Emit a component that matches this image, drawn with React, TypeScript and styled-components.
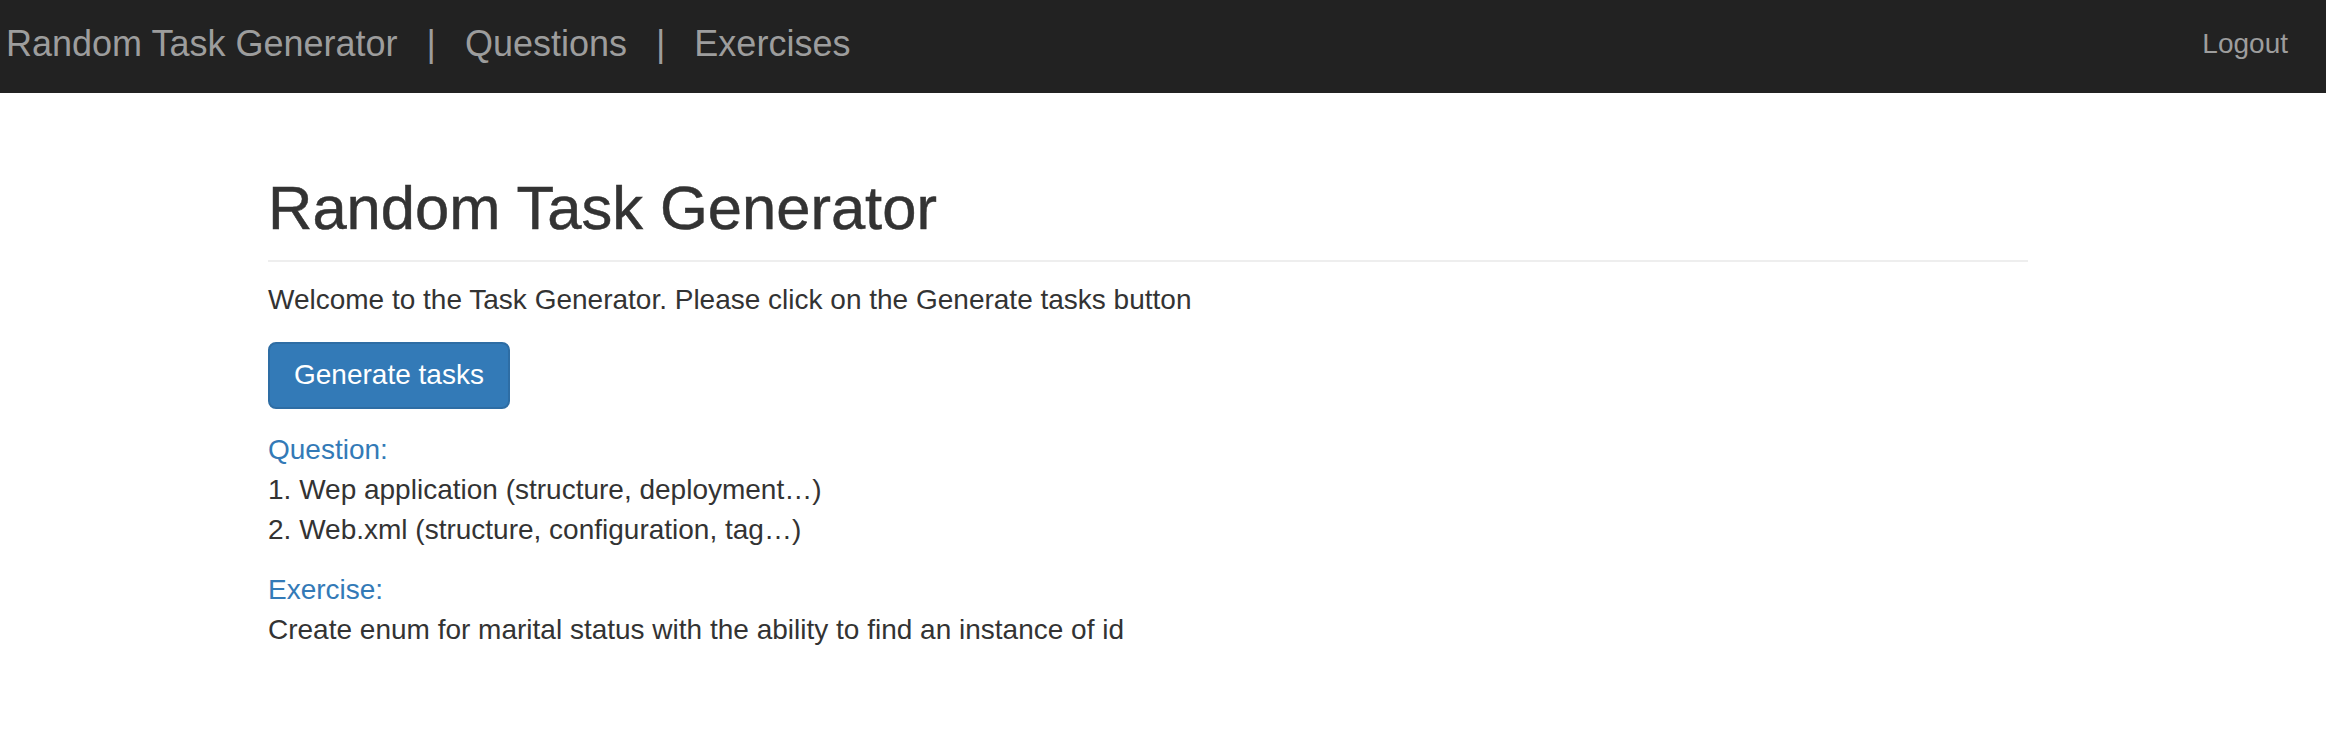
import styled, { createGlobalStyle } from "styled-components";

const GlobalStyle = createGlobalStyle`
  body {
    margin: 0;
    background: #fff;
    color: #333;
    font-family: "Liberation Sans", Arial, sans-serif;
    font-size: 28px;
    line-height: 40px;
  }
`;

const navLinks = ["Questions", "Exercises"];

const questions = [
  "1. Wep application (structure, deployment…)",
  "2. Web.xml (structure, configuration, tag…)",
];

const App = () => {
  return (
    <>
      <GlobalStyle />
      <Navbar>
        <Brand href="#">Random Task Generator</Brand>
        {navLinks.map((link) => (
          <NavGroup key={link}>
            <Separator>|</Separator>
            <NavLink href="#">{link}</NavLink>
          </NavGroup>
        ))}
        <Logout href="#">Logout</Logout>
      </Navbar>
      <Main>
        <PageHeader>
          <Title>Random Task Generator</Title>
        </PageHeader>
        <Intro>Welcome to the Task Generator. Please click on the Generate tasks button</Intro>
        <PrimaryButton type="button">Generate tasks</PrimaryButton>
        <Block>
          <BlockLabel>Question:</BlockLabel>
          {questions.map((q) => (
            <Line key={q}>{q}</Line>
          ))}
        </Block>
        <Block $spaced>
          <BlockLabel>Exercise:</BlockLabel>
          <Line>Create enum for marital status with the ability to find an instance of id</Line>
        </Block>
      </Main>
    </>
  );
};

const Navbar = styled.nav`
  display: flex;
  align-items: flex-start;
  box-sizing: border-box;
  height: 93px;
  padding: 24px 38px 0 6px;
  background: #222;
`;

const Brand = styled.a`
  color: #9d9d9d;
  font-size: 36px;
  line-height: 40px;
  text-decoration: none;
`;

const NavGroup = styled.div`
  display: flex;
  align-items: flex-start;
`;

const Separator = styled.span`
  margin: 0 29px;
  color: #9d9d9d;
  font-size: 36px;
  line-height: 40px;
`;

const NavLink = styled.a`
  color: #9d9d9d;
  font-size: 36px;
  line-height: 40px;
  text-decoration: none;
`;

const Logout = styled.a`
  margin-left: auto;
  color: #9d9d9d;
  font-size: 28px;
  line-height: 40px;
  text-decoration: none;
`;

const Main = styled.main`
  width: 1760px;
  margin-left: 268px;
  padding-top: 82px;
`;

const PageHeader = styled.div`
  padding-bottom: 19px;
  border-bottom: 2px solid #eee;
`;

const Title = styled.h1`
  margin: 0;
  color: #333;
  font-size: 61.5px;
  font-weight: 500;
  line-height: 66px;
  -webkit-text-stroke: 0.5px #333;
`;

const Intro = styled.p`
  margin: 18px 0 22px;
`;

const PrimaryButton = styled.button`
  display: block;
  padding: 11px 24px 12px;
  border: 2px solid #2e6da4;
  border-radius: 8px;
  background: #337ab7;
  color: #fff;
  font-family: inherit;
  font-size: 28px;
  line-height: 40px;
  cursor: pointer;
`;

const Block = styled.div<{ $spaced?: boolean }>`
  margin-top: ${({ $spaced }) => ($spaced ? "20px" : "21px")};
`;

const BlockLabel = styled.div`
  color: #337ab7;
`;

const Line = styled.div`
  color: #333;
`;

export default App;
